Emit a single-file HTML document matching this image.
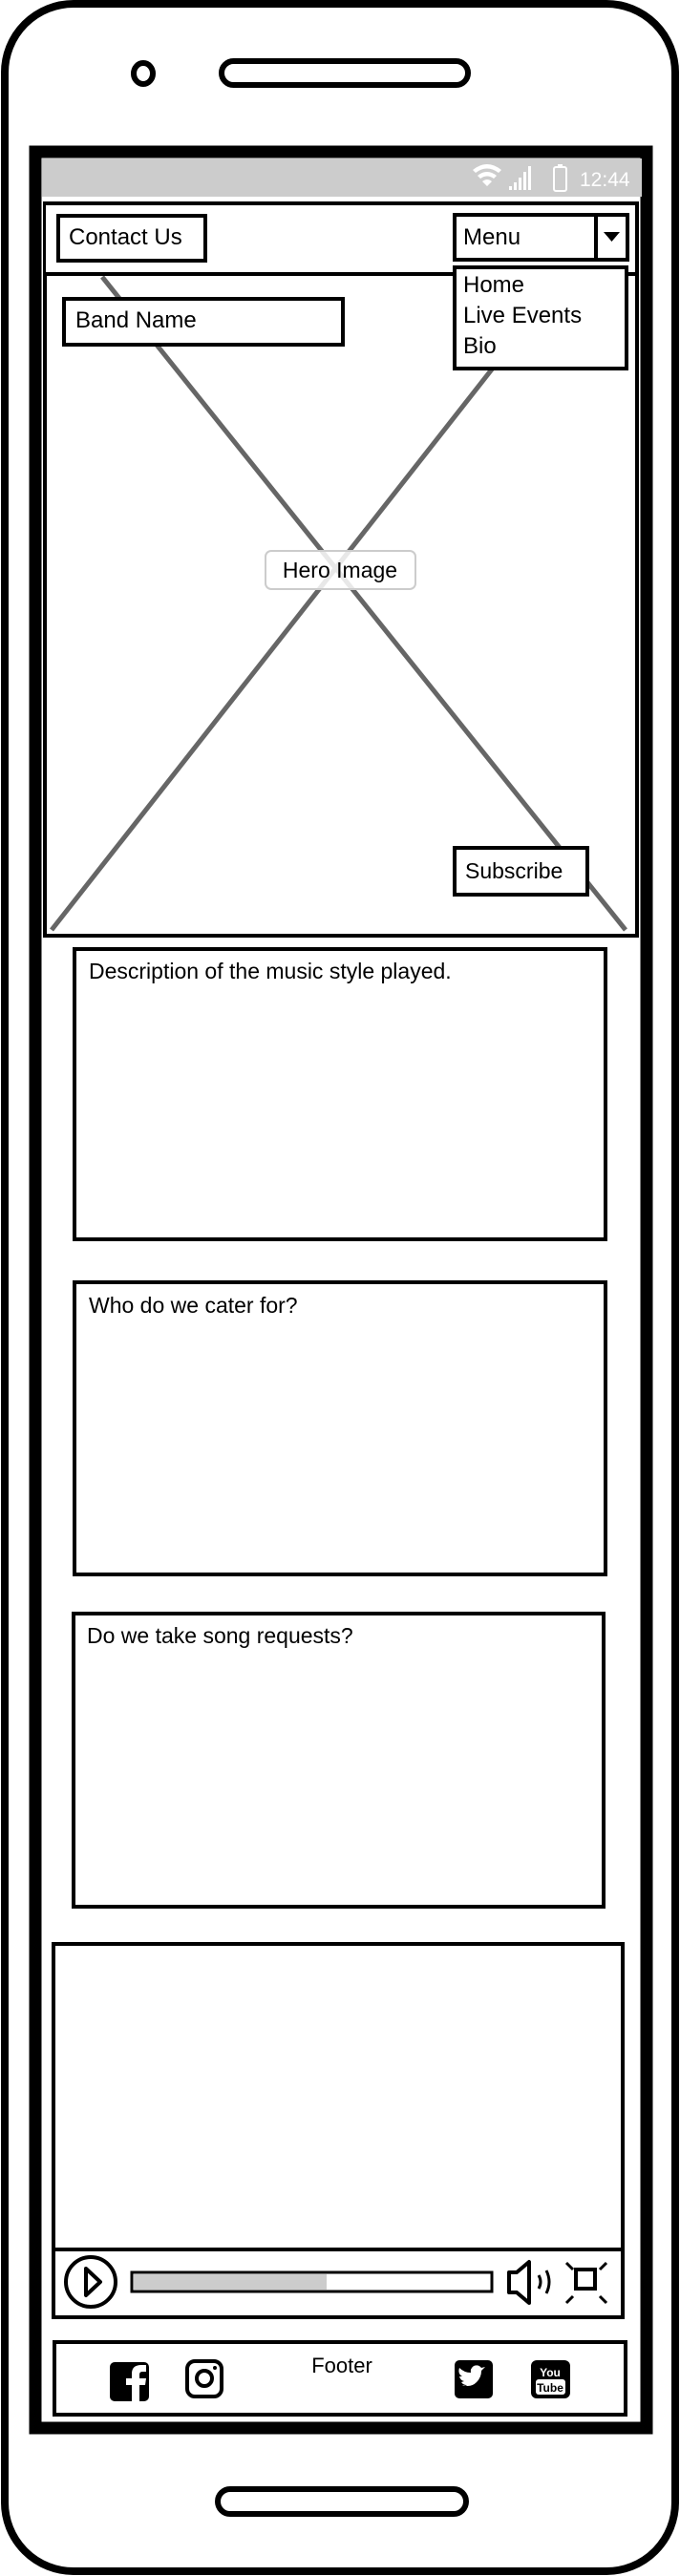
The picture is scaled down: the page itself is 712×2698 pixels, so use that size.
<!DOCTYPE html>
<html><head><meta charset="utf-8"><style>
html,body{margin:0;padding:0;background:#fff;}
svg{display:block;}
text{font-family:"Liberation Sans",sans-serif;fill:#000;}
</style></head><body>
<svg width="712" height="2698" viewBox="0 0 712 2698" xmlns="http://www.w3.org/2000/svg">
<rect x="5" y="4" width="702" height="2689" rx="72" fill="#fff" stroke="#000" stroke-width="8"/>
<ellipse cx="150" cy="77" rx="10" ry="11" fill="none" stroke="#000" stroke-width="6"/>
<rect x="232" y="64" width="258" height="25" rx="12.5" fill="none" stroke="#000" stroke-width="6"/>
<rect x="228" y="2607" width="260" height="26" rx="13" fill="none" stroke="#000" stroke-width="6"/>
<rect x="37" y="159" width="640" height="2384" fill="#fff" stroke="#000" stroke-width="13"/>
<rect x="44" y="166" width="628" height="40" fill="#ccc"/>
<g fill="#fff">
<path d="M495 178 q15 -12 30 0 l-3 3 q-12 -9 -24 0z M500 184 q10 -8 20 0 l-3 3 q-7 -5 -14 0z M505 190 q5 -4 10 0 l-5 5z"/>
<rect x="533" y="195" width="3" height="4"/><rect x="538" y="191" width="3" height="8"/><rect x="543" y="186" width="3" height="13"/><rect x="548" y="180" width="3" height="19"/><rect x="553" y="174" width="3" height="25"/>
<rect x="580" y="175" width="13" height="25" rx="2" fill="none" stroke="#fff" stroke-width="2"/><rect x="584" y="172" width="5" height="3"/>
</g>
<text x="607" y="195" font-size="21" style="fill:#fff">12:44</text>
<rect x="47" y="213" width="620" height="767" fill="#fff" stroke="#000" stroke-width="4"/>
<line x1="107" y1="290" x2="655" y2="974" stroke="#666" stroke-width="5"/>
<line x1="591" y1="290" x2="54" y2="974" stroke="#666" stroke-width="5"/>
<rect x="48" y="215" width="617" height="70" fill="#fff"/>
<line x1="47" y1="287" x2="667" y2="287" stroke="#000" stroke-width="4"/>
<rect x="61" y="226" width="154" height="47" fill="#fff" stroke="#000" stroke-width="4"/>
<text x="72" y="256" font-size="24">Contact Us</text>
<rect x="476" y="225" width="181" height="47" fill="#fff" stroke="#000" stroke-width="4"/>
<line x1="624" y1="225" x2="624" y2="272" stroke="#000" stroke-width="4"/>
<path d="M632 243 h17 l-8.5 10z" fill="#000"/>
<text x="485" y="256" font-size="24">Menu</text>
<rect x="476" y="280" width="180" height="106" fill="#fff" stroke="#000" stroke-width="4"/>
<text x="485" y="306" font-size="24">Home</text>
<text x="485" y="338" font-size="24">Live Events</text>
<text x="485" y="370" font-size="24">Bio</text>
<rect x="67" y="313" width="292" height="48" fill="#fff" stroke="#000" stroke-width="4"/>
<text x="79" y="343" font-size="24">Band Name</text>
<rect x="278" y="577" width="157" height="40" rx="6" fill="rgba(255,255,255,0.85)" stroke="#ccc" stroke-width="2"/>
<text x="356" y="605" font-size="23" text-anchor="middle">Hero Image</text>
<rect x="476" y="888" width="139" height="49" fill="#fff" stroke="#000" stroke-width="4"/>
<text x="487" y="920" font-size="23">Subscribe</text>
<rect x="78" y="994" width="556" height="304" fill="none" stroke="#000" stroke-width="4"/>
<text x="93" y="1025" font-size="23">Description of the music style played.</text>
<rect x="78" y="1343" width="556" height="306" fill="none" stroke="#000" stroke-width="4"/>
<text x="93" y="1375" font-size="23">Who do we cater for?</text>
<rect x="77" y="1690" width="555" height="307" fill="none" stroke="#000" stroke-width="4"/>
<text x="91" y="1721" font-size="23">Do we take song requests?</text>
<rect x="56" y="2036" width="596" height="391" fill="none" stroke="#000" stroke-width="4"/>
<line x1="56" y1="2356" x2="652" y2="2356" stroke="#000" stroke-width="4"/>
<circle cx="95" cy="2390" r="26" fill="none" stroke="#000" stroke-width="4"/>
<path d="M90 2376 l15 14 l-15 14z" fill="none" stroke="#000" stroke-width="4" stroke-linejoin="round"/>
<rect x="138" y="2380" width="377" height="20" fill="#fff" stroke="#000" stroke-width="3"/>
<rect x="140" y="2382" width="202" height="16" fill="#ccc"/>
<path d="M533 2380 h8 l13 -11 v43 l-13 -11 h-8z" fill="none" stroke="#000" stroke-width="4" stroke-linejoin="round"/>
<path d="M564 2383 q4 7 0 14 M572 2378 q6 12 0 24" fill="none" stroke="#000" stroke-width="3"/>
<rect x="603" y="2377" width="20" height="20" fill="none" stroke="#000" stroke-width="4"/>
<path d="M593 2370 l7 7 M635 2370 l-7 7 M593 2412 l7 -7 M635 2412 l-7 -7" stroke="#000" stroke-width="3"/>
<rect x="57" y="2453" width="598" height="76" fill="none" stroke="#000" stroke-width="4"/>
<text x="358" y="2485" font-size="22" text-anchor="middle">Footer</text>
<rect x="115" y="2474" width="41" height="41" rx="5" fill="#000"/>
<path d="M138 2515 v-17 h-6 v-7 h6 v-5 q0 -9 10 -9 h5 v7 h-4 q-3 0 -3 3 v4 h7 l-1 7 h-6 v17z" fill="#fff"/>
<rect x="196" y="2473" width="36" height="37" rx="8" fill="none" stroke="#000" stroke-width="4"/>
<circle cx="214" cy="2491" r="8" fill="none" stroke="#000" stroke-width="4"/>
<circle cx="225" cy="2480" r="2" fill="#000"/>
<rect x="476" y="2472" width="40" height="40" rx="5" fill="#000"/>
<path d="M484 2498 q9 3 15 -3 q5 -5 5 -12 l4 -4 l-4 1 q-3 -4 -8 -2 q-4 3 -3 7 q-7 0 -12 -5 q-2 6 3 9 l-3 0 q1 4 5 5 l-3 1 q2 3 6 3 q-3 2 -5 0z" fill="#fff"/>
<rect x="556" y="2472" width="41" height="40" rx="6" fill="#000"/>
<text x="576" y="2489" font-size="12" text-anchor="middle" font-weight="bold" style="fill:#fff">You</text>
<rect x="561" y="2492" width="31" height="16" rx="3" fill="#fff"/>
<text x="576" y="2505" font-size="12" text-anchor="middle" font-weight="bold">Tube</text>
</svg>
</body></html>
